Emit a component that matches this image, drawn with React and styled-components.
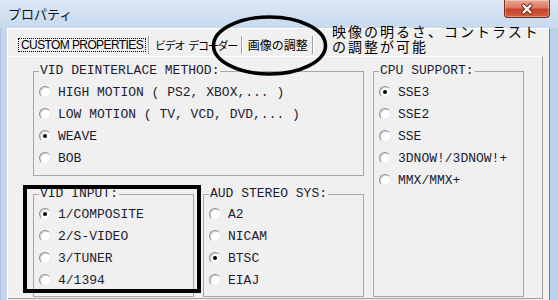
import React from "react";
import styled, { createGlobalStyle } from "styled-components";

const GlobalStyle = createGlobalStyle`
  html, body { margin: 0; padding: 0; background: #bed3ec; }
  body { width: 558px; height: 300px; overflow: hidden; }
`;

const Window = styled.div`
  position: relative;
  width: 558px;
  height: 300px;
  overflow: hidden;
  display: flex;
  flex-direction: column;
  background: linear-gradient(90deg, #a9c0dc 0px, #c3d7ee 2px, #bcd2eb 100%);
`;

const TitleBar = styled.div`
  height: 28px;
  flex: none;
  display: flex;
  justify-content: space-between;
  align-items: flex-start;
  padding-left: 8px;
  background: linear-gradient(#dbe7f5, #c8daef);
`;

const Title = styled.span`
  font: 13px/28px "Noto Sans CJK JP", sans-serif;
  color: #111;
`;

const CloseButton = styled.div`
  width: 46px;
  height: 18px;
  margin-right: 8px;
  box-sizing: border-box;
  border: 1px solid #7a2a1c;
  border-top: none;
  border-radius: 0 0 4px 4px;
  background: linear-gradient(#eaa897 0%, #dc7a63 45%, #c5432b 55%, #d0603f 100%);
  box-shadow: inset 0 0 0 1px rgba(255, 255, 255, 0.3);
  display: flex;
  align-items: center;
  justify-content: center;
`;

const Client = styled.div`
  flex: 1;
  min-height: 0;
  display: flex;
  flex-direction: column;
  margin: 0 8px 0 7px;
  background: #f0f0f0;
  border-top: 1px solid #fff;
  border-left: 1px solid #fff;
  border-right: 1px solid #6b7f96;
`;

const TabStrip = styled.div`
  height: 27px;
  flex: none;
  box-sizing: border-box;
  display: flex;
  align-items: flex-start;
  padding: 7px 0 0 8px;
`;

const Tab = styled.div`
  height: 18px;
  display: flex;
  align-items: center;
  padding: 0 2px 0 ${(p) => (p.$first ? "2px" : "3px")};
  border-right: 1px solid #a0a0a0;
  box-shadow: 1px 0 0 #fff;
  margin-right: 1px;
`;

const TabLabel = styled.span`
  display: block;
  padding: 0 ${(p) => (p.$focused ? "2px" : "1px")};
  line-height: 12px;
  border: 1px dotted ${(p) => (p.$focused ? "#000" : "transparent")};
  font-family: ${(p) =>
    p.$latin ? '"Liberation Sans", sans-serif' : '"Noto Sans CJK JP", sans-serif'};
  font-size: ${(p) => p.$size || "12px"};
  letter-spacing: ${(p) => p.$ls || "0px"};
  color: #000;
  white-space: pre;
`;

const Panel = styled.div`
  margin-right: 6px;
  border-top: 1px solid #fff;
  border-right: 1px solid #a0a0a0;
  border-bottom: 1px solid #a0a0a0;
  padding: 7px 0 1px 25px;
  display: grid;
  grid-template-columns: 161px 161px 151px;
  grid-template-rows: 112px 110px;
  gap: 11px 9px;
  align-content: start;
`;

const GroupBox = styled.fieldset`
  margin: 0;
  min-width: 0;
  padding: ${(p) => p.$pt}px 0 0 0;
  border: 1px solid #a7a7a7;
  grid-column: ${(p) => p.$col};
  grid-row: ${(p) => p.$row};
`;

const Legend = styled.legend`
  margin-left: 5px;
  padding: 0 1px;
  font: 13px/14px "Liberation Mono", monospace;
  color: #1c1c30;
`;

const RadioRow = styled.div`
  display: flex;
  align-items: center;
  height: 22px;
  padding-left: 5px;
  gap: 7px;
  font: 13px "Liberation Mono", monospace;
  color: #1c1c30;
  white-space: pre;
`;

const RadioCircle = styled.span`
  position: relative;
  width: 12px;
  height: 12px;
  box-sizing: border-box;
  flex: none;
  border-radius: 50%;
  border: 1px solid;
  border-color: #8f8f8f #ececec #ececec #8f8f8f;
  background: #fff;
  box-shadow: inset 1px 1px 0 #d4d4d4;
  &::after {
    content: "";
    display: ${(p) => (p.$checked ? "block" : "none")};
    position: absolute;
    left: 3px;
    top: 3px;
    width: 4px;
    height: 4px;
    border-radius: 50%;
    background: #000;
  }
`;

const Ellipse = styled.svg`
  position: absolute;
  left: 211px;
  top: 15px;
`;

const Note = styled.div`
  position: absolute;
  left: 332px;
  top: 24px;
  font: 14px/15px "Noto Sans CJK JP", sans-serif;
  letter-spacing: 2px;
  color: #000;
`;

const Highlight = styled.div`
  position: absolute;
  left: 23px;
  top: 185px;
  width: 178px;
  height: 108px;
  box-sizing: border-box;
  border: 4px solid #000;
`;

const Radio = ({ label, checked }) => (
  <RadioRow>
    <RadioCircle $checked={checked} />
    {label}
  </RadioRow>
);

const groups = [
  {
    title: "VID DEINTERLACE METHOD:",
    col: "1 / 3",
    row: "1",
    pt: 3,
    items: ["HIGH MOTION ( PS2, XBOX,... )", "LOW MOTION ( TV, VCD, DVD,... )", "WEAVE", "BOB"],
    checked: 2,
  },
  {
    title: "CPU SUPPORT:",
    col: "3",
    row: "1 / 3",
    pt: 3,
    items: ["SSE3", "SSE2", "SSE", "3DNOW!/3DNOW!+", "MMX/MMX+"],
    checked: 0,
  },
  {
    title: "VID INPUT:",
    col: "1",
    row: "2",
    pt: 2,
    items: ["1/COMPOSITE", "2/S-VIDEO", "3/TUNER", "4/1394"],
    checked: 0,
  },
  {
    title: "AUD STEREO SYS:",
    col: "2",
    row: "2",
    pt: 2,
    items: ["A2", "NICAM", "BTSC", "EIAJ"],
    checked: 2,
  },
];

export default function App() {
  return (
    <>
      <GlobalStyle />
      <Window>
        <TitleBar>
          <Title>プロパティ</Title>
          <CloseButton>
            <svg width="14" height="12" viewBox="0 0 14 12">
              <path d="M3.5 2.5 L10.5 9.5 M10.5 2.5 L3.5 9.5" stroke="#6a2214" strokeWidth="4.2" strokeLinecap="round" />
              <path d="M3.5 2.5 L10.5 9.5 M10.5 2.5 L3.5 9.5" stroke="#fff" strokeWidth="2.4" strokeLinecap="round" />
            </svg>
          </CloseButton>
        </TitleBar>
        <Client>
          <TabStrip>
            <Tab $first>
              <TabLabel $latin $focused $ls="-0.6px">CUSTOM PROPERTIES</TabLabel>
            </Tab>
            <Tab>
              <TabLabel $size="11px" $ls="-1.3px">{"ビデオ\u2002デコーダー"}</TabLabel>
            </Tab>
            <Tab>
              <TabLabel>画像の調整</TabLabel>
            </Tab>
          </TabStrip>
          <Panel>
            {groups.map((g) => (
              <GroupBox key={g.title} $col={g.col} $row={g.row} $pt={g.pt}>
                <Legend>{g.title}</Legend>
                {g.items.map((it, i) => (
                  <Radio key={it} label={it} checked={i === g.checked} />
                ))}
              </GroupBox>
            ))}
          </Panel>
        </Client>
        <Ellipse width="117" height="61" viewBox="0 0 117 61">
          <ellipse cx="58.5" cy="30.5" rx="56" ry="28.5" fill="none" stroke="#000" strokeWidth="3.5" />
        </Ellipse>
        <Note>
          映像の明るさ、コントラスト
          <br />
          の調整が可能
        </Note>
        <Highlight />
      </Window>
    </>
  );
}
